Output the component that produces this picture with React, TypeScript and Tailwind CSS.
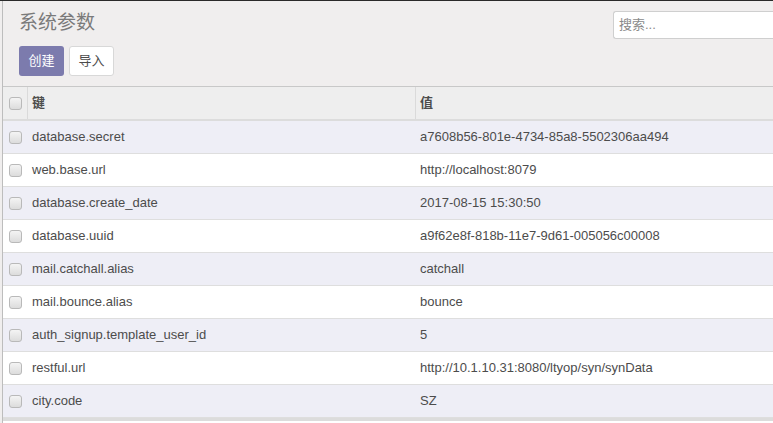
import React from "react";

const rows: [string, string][] = [
  ["database.secret", "a7608b56-801e-4734-85a8-5502306aa494"],
  ["web.base.url", "http://localhost:8079"],
  ["database.create_date", "2017-08-15 15:30:50"],
  ["database.uuid", "a9f62e8f-818b-11e7-9d61-005056c00008"],
  ["mail.catchall.alias", "catchall"],
  ["mail.bounce.alias", "bounce"],
  ["auth_signup.template_user_id", "5"],
  ["restful.url", "http://10.1.10.31:8080/ltyop/syn/synData"],
  ["city.code", "SZ"],
];

function Box() {
  return (
    <div className="w-[13px] h-[13px] rounded-[3px] border border-[#b9b9b9] bg-[linear-gradient(#f4f4f4,#dcdcdc)]" />
  );
}

export default function App() {
  return (
    <div
      className="w-[773px] h-[423px] overflow-hidden bg-[#f0eeee] border-t border-[#2a2a2a] pl-[2px]"
      style={{ fontFamily: '"Liberation Sans", Arial, "Noto Sans CJK SC", sans-serif' }}
    >
      <div className="h-full border-l border-[#bdbdbd] flex flex-col">
        <div className="h-[85px] flex justify-between shrink-0">
          <div className="pl-[16px] pt-[9px] flex flex-col">
            <div className="text-[19px] leading-[26px] text-[#7a7a7a]">系统参数</div>
            <div className="flex gap-[5px] mt-[10px]">
              <div className="w-[45px] h-[30px] rounded-[3px] bg-[#7c7bad] text-white text-[13px] flex items-center justify-center">创建</div>
              <div className="w-[45px] h-[30px] rounded-[3px] bg-white border border-[#d8d8d8] text-[#4c4c4c] text-[13px] flex items-center justify-center">导入</div>
            </div>
          </div>
          <div className="pt-[10px]">
            <div className="w-[160px] h-[28px] bg-white border border-[#cfcfcf] rounded-l-[3px] border-r-0 flex items-center pl-[5px] text-[13px] text-[#8a8a8a]">搜索...</div>
          </div>
        </div>
        <div className="border-t border-[#c8c8c8] flex-1 bg-white">
          <div className="flex h-[34px] bg-[#eeeeee] border-b-2 border-[#dcdcdc] text-[13px] font-bold text-[#4c4c4c]">
            <div className="w-[25px] flex items-center justify-center border-r border-[#dadada]"><Box /></div>
            <div className="w-[388px] flex items-center pl-[4px] border-r border-[#dadada]">键</div>
            <div className="flex-1 flex items-center pl-[4px]">值</div>
          </div>
          {rows.map(([k, v], i) => (
            <div
              key={k}
              className={`flex h-[33px] border-b border-[#dedede] text-[13px] text-[#4c4c4c] ${i % 2 === 0 ? "bg-[#eeeef6]" : "bg-white"}`}
            >
              <div className="w-[25px] flex items-center justify-center"><Box /></div>
              <div className="w-[388px] flex items-center pl-[4px]">{k}</div>
              <div className="flex-1 flex items-center pl-[4px]">{v}</div>
            </div>
          ))}
          <div className="h-[3px] bg-[#dcdcdc]" />
        </div>
      </div>
    </div>
  );
}
